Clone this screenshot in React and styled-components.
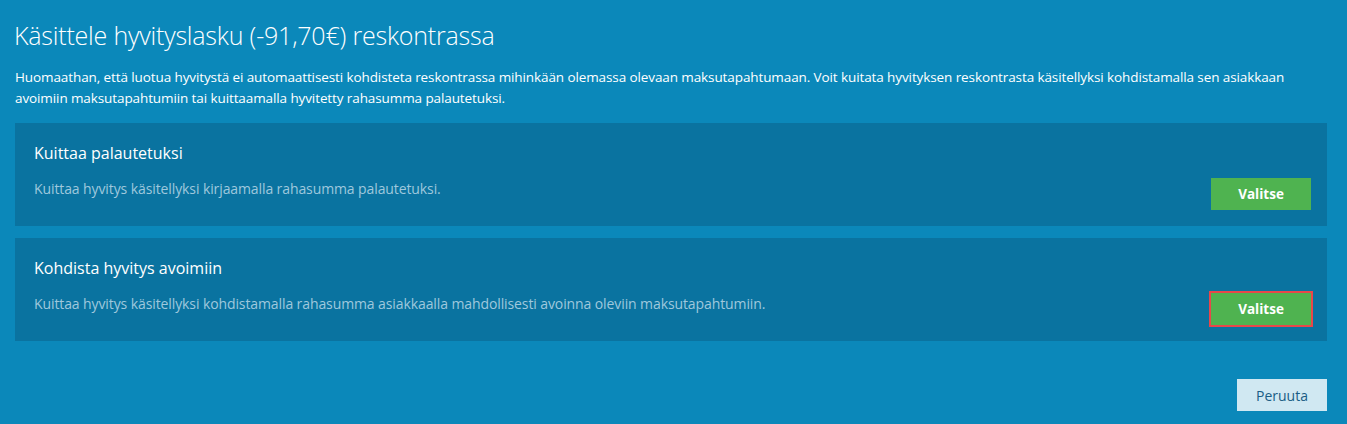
import React from "react";
import styled, { createGlobalStyle } from "styled-components";

const Global = createGlobalStyle`
  html, body { margin: 0; padding: 0; background: #0b88ba; }
  body { font-family: "Open Sans", "Noto Sans", sans-serif; color: #fff; }
`;

const Page = styled.div`
  width: 1347px;
  height: 424px;
  box-sizing: border-box;
  padding: 18px 20px 0 14px;
  display: flex;
  flex-direction: column;
`;

const Title = styled.h1`
  margin: 0;
  font-weight: 300;
  font-size: 25px;
  line-height: 34px;
  letter-spacing: -0.2px;
`;

const Intro = styled.p`
  margin: 15px 0 0 1px;
  font-size: 13.5px;
  line-height: 21px;
  letter-spacing: -0.1px;
`;

const Cards = styled.div`
  margin: 14px 0 0 1px;
  display: flex;
  flex-direction: column;
  gap: 12px;
`;

const Card = styled.section`
  background: #0a73a0;
  height: 103px;
  box-sizing: border-box;
  padding: 19px 16px 0 19px;
  display: grid;
  grid-template-columns: 1fr auto;
  grid-template-rows: auto auto;
  align-content: start;
  align-items: start;
  column-gap: 20px;
`;

const CardTitle = styled.h2`
  margin: 0;
  grid-column: 1 / 3;
  font-weight: 400;
  font-size: 16px;
  line-height: 22px;
`;

const CardText = styled.p`
  margin: 16px 0 0 0;
  font-size: 14px;
  line-height: 18px;
  color: #9fc8dd;
  letter-spacing: -0.1px;
`;

const Choose = styled.button`
  margin-top: ${(p) => (p.$focused ? "12px" : "14px")};
  width: ${(p) => (p.$focused ? "104px" : "100px")};
  height: ${(p) => (p.$focused ? "36px" : "32px")};
  margin-right: ${(p) => (p.$focused ? "-2px" : "0")};
  background: #4fb350;
  border: ${(p) => (p.$focused ? "2px solid #e8474a" : "none")};
  color: #fff;
  font-family: "Open Sans", sans-serif;
  font-weight: 700;
  font-size: 13.5px;
  padding: 0;
  cursor: pointer;
`;

const Footer = styled.div`
  display: flex;
  justify-content: flex-end;
  margin-top: 38px;
`;

const Cancel = styled.button`
  width: 90px;
  height: 32px;
  background: #d0e8f2;
  border: none;
  color: #1a5d85;
  font-family: "Open Sans", sans-serif;
  font-size: 14px;
  padding: 0;
`;

export default function App() {
  return (
    <>
      <Global />
      <Page>
        <Title>Käsittele hyvityslasku (-91,70€) reskontrassa</Title>
        <Intro>
          Huomaathan, että luotua hyvitystä ei automaattisesti kohdisteta reskontrassa mihinkään olemassa olevaan
          maksutapahtumaan. Voit kuitata hyvityksen reskontrasta käsitellyksi kohdistamalla sen asiakkaan avoimiin
          maksutapahtumiin tai kuittaamalla hyvitetty rahasumma palautetuksi.
        </Intro>
        <Cards>
          <Card>
            <CardTitle>Kuittaa palautetuksi</CardTitle>
            <CardText>Kuittaa hyvitys käsitellyksi kirjaamalla rahasumma palautetuksi.</CardText>
            <Choose>Valitse</Choose>
          </Card>
          <Card>
            <CardTitle>Kohdista hyvitys avoimiin</CardTitle>
            <CardText>
              Kuittaa hyvitys käsitellyksi kohdistamalla rahasumma asiakkaalla mahdollisesti avoinna oleviin
              maksutapahtumiin.
            </CardText>
            <Choose $focused>Valitse</Choose>
          </Card>
        </Cards>
        <Footer>
          <Cancel>Peruuta</Cancel>
        </Footer>
      </Page>
    </>
  );
}
